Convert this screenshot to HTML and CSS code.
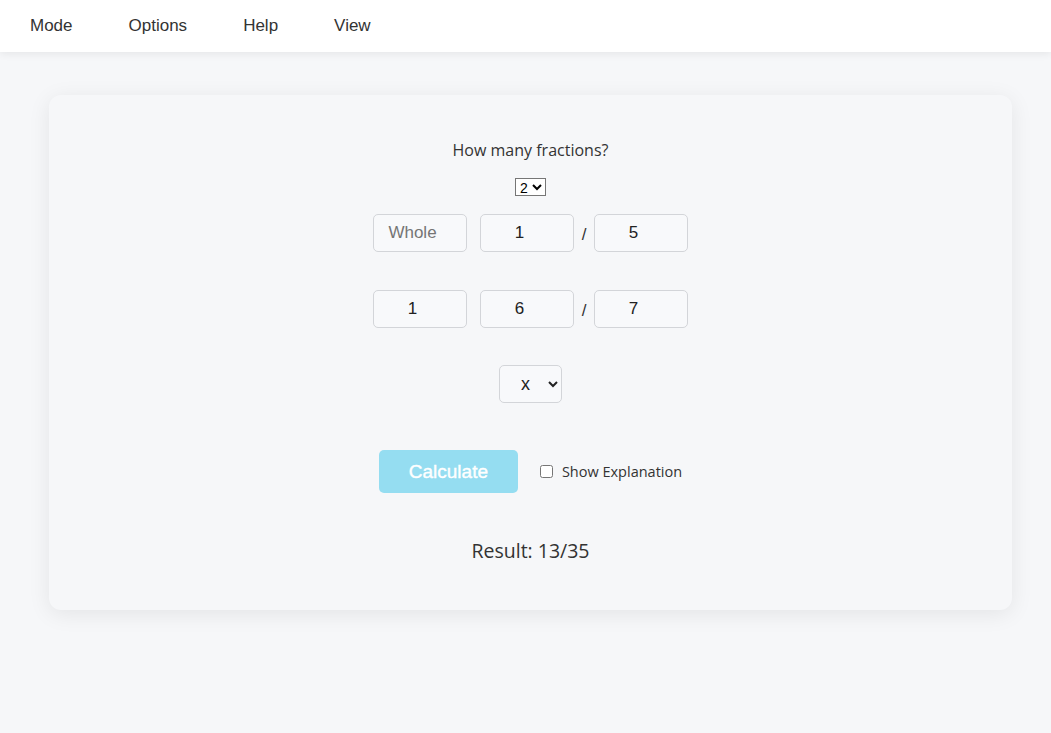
FILE: index.html
```html
<!DOCTYPE html>
<html lang="en">
<head>
<meta charset="utf-8">
<title>Fraction Calculator</title>
<link rel="stylesheet" href="styles.css">
</head>
<body>
<nav class="navbar">
  <a class="nav-item">Mode</a>
  <a class="nav-item">Options</a>
  <a class="nav-item">Help</a>
  <a class="nav-item">View</a>
</nav>
<main class="card">
  <div class="label">How many fractions?</div>
  <select class="count-select">
    <option>1</option>
    <option selected>2</option>
    <option>3</option>
  </select>
  <div class="frac-row first">
    <input class="box whole" type="number" placeholder="Whole">
    <input class="box" type="number" value="1">
    <span class="slash">/</span>
    <input class="box" type="number" value="5">
  </div>
  <div class="frac-row">
    <input class="box whole" type="number" value="1">
    <input class="box" type="number" value="6">
    <span class="slash">/</span>
    <input class="box" type="number" value="7">
  </div>
  <select class="op-select">
    <option selected>x</option>
    <option>+</option>
    <option>-</option>
    <option>÷</option>
  </select>
  <div class="action-row">
    <button class="calc-btn">Calculate</button>
    <label class="explain"><input type="checkbox" class="check"> Show Explanation</label>
  </div>
  <div class="result">Result: 13/35</div>
</main>
</body>
</html>
```
FILE: styles.css
```css
* { box-sizing: border-box; }
html, body { margin: 0; padding: 0; }
body {
  background: #f6f7f9;
  font-family: "Open Sans", "Liberation Sans", sans-serif;
  color: #333;
  height: 733px;
}
.navbar {
  height: 52px;
  background: #fff;
  display: flex;
  align-items: center;
  gap: 56px;
  padding-left: 30px;
  box-shadow: 0 2px 8px rgba(0,0,0,0.07);
  position: relative;
}
.nav-item {
  font-family: "Liberation Sans", Arial, sans-serif;
  font-size: 17px;
  color: #333;
  cursor: pointer;
  line-height: 1;
  margin-top: -2px;
}
.card {
  margin: 43px 39px 0 49px;
  height: 515px;
  background: #f6f7f9;
  border-radius: 12px;
  box-shadow: 0 4px 22px rgba(0,0,0,0.08);
  display: flex;
  flex-direction: column;
  align-items: center;
  padding-top: 44px;
}
.label {
  font-size: 16px;
  line-height: 22px;
  color: #333;
}
.count-select {
  margin-top: 17px;
  height: 18px;
  width: 31px;
  font-family: "Liberation Sans", Arial, sans-serif;
  font-size: 14px;
  padding: 0;
  border: 1px solid #767676;
  border-radius: 0;
  background: #fff;
  color: #000;
}
.frac-row {
  display: flex;
  align-items: center;
  margin-top: 38px;
}
.frac-row.first { margin-top: 18px; }
.box {
  width: 94px;
  height: 38px;
  border: 1px solid #d3d5d9;
  border-radius: 5px;
  background: #f8f9fb;
  font-family: "Liberation Sans", Arial, sans-serif;
  font-size: 17px;
  color: #222;
  text-align: center;
  padding: 0 10px;
}
.box::placeholder { color: #757575; }
.box.whole { margin-right: 13px; }
.slash {
  width: 20px;
  text-align: center;
  font-family: "Liberation Sans", Arial, sans-serif;
  font-size: 17px;
  color: #333;
  padding-top: 4px;
}
.op-select {
  margin-top: 37px;
  width: 63px;
  height: 38px;
  border: 1px solid #d3d5d9;
  border-radius: 5px;
  background: #f8f9fb;
  font-family: "Liberation Sans", Arial, sans-serif;
  font-size: 18px;
  color: #222;
  padding: 0 8px 0 17px;
}
.action-row {
  margin-top: 47px;
  display: flex;
  align-items: center;
}
.calc-btn {
  width: 139px;
  height: 43px;
  border: none;
  border-radius: 5px;
  background: #95ddf1;
  color: #fff;
  font-family: "Liberation Sans", Arial, sans-serif;
  font-size: 19px;
  font-weight: normal;
  -webkit-text-stroke: 0.4px #fff;
}
.explain {
  margin-left: 18px;
  display: flex;
  align-items: center;
  font-size: 14.5px;
  color: #333;
}
.check {
  width: 13px;
  height: 13px;
  margin: 0 9px 0 4px;
}
.result {
  margin-top: 44px;
  font-size: 19.5px;
  line-height: 28px;
  color: #333;
}
```
